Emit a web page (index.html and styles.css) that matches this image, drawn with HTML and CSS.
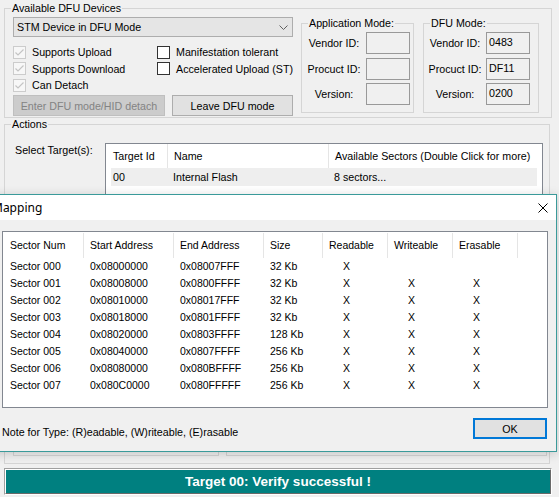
FILE: index.html
```html
<!DOCTYPE html>
<html lang="en">
<head>
  <meta charset="UTF-8" />
  <title>DfuSe Demo</title>
  <link rel="stylesheet" href="styles.css">
</head>
<body>
  <div class="window">
    <fieldset class="group devices">
      <legend>Available DFU Devices</legend>
      <div class="devices-body">
        <div class="device-col">
          <div class="combo">
            <span>STM Device in DFU Mode</span>
            <svg class="chevron" width="9" height="5" viewBox="0 0 9 5"><path d="M0.5 0.5 L4.5 4.5 L8.5 0.5" fill="none" stroke="#606060" /></svg>
          </div>
          <div class="checks">
            <label class="check off"><span class="box"><svg width="11" height="11" viewBox="0 0 11 11"><path d="M1.5 5.5 L4 8 L9.5 2.5" fill="none" stroke="#c4c4c4" stroke-width="1.2" /></svg></span>Supports Upload</label>
            <label class="check"><span class="box"></span>Manifestation tolerant</label>
            <label class="check off"><span class="box"><svg width="11" height="11" viewBox="0 0 11 11"><path d="M1.5 5.5 L4 8 L9.5 2.5" fill="none" stroke="#c4c4c4" stroke-width="1.2" /></svg></span>Supports Download</label>
            <label class="check"><span class="box"></span>Accelerated Upload (ST)</label>
            <label class="check off"><span class="box"><svg width="11" height="11" viewBox="0 0 11 11"><path d="M1.5 5.5 L4 8 L9.5 2.5" fill="none" stroke="#c4c4c4" stroke-width="1.2" /></svg></span>Can Detach</label>
          </div>
          <div class="buttons">
            <button class="btn btn-detach" disabled>Enter DFU mode/HID detach</button>
            <button class="btn btn-leave">Leave DFU mode</button>
          </div>
        </div>

        <fieldset class="group ids app-mode">
          <legend>Application Mode:</legend>
          <div class="id-grid">
            <span>Vendor ID:</span><span class="edit"></span>
            <span>Procuct ID:</span><span class="edit"></span>
            <span>Version:</span><span class="edit"></span>
          </div>
        </fieldset>

        <fieldset class="group ids dfu-mode">
          <legend>DFU Mode:</legend>
          <div class="id-grid">
            <span>Vendor ID:</span><span class="edit">0483</span>
            <span>Procuct ID:</span><span class="edit">DF11</span>
            <span>Version:</span><span class="edit">0200</span>
          </div>
        </fieldset>
      </div>
    </fieldset>

    <fieldset class="group actions">
      <legend>Actions</legend>
      <div class="target-row">
        <span class="target-label">Select Target(s):</span>
        <div class="listview targets">
          <div class="head">
            <span>Target Id</span><span>Name</span><span>Available Sectors (Double Click for more)</span>
          </div>
          <div class="item">
            <span>00</span><span>Internal Flash</span><span>8 sectors...</span>
          </div>
        </div>
      </div>
      <div class="action-boxes">
        <div class="box-upload"></div>
        <div class="box-upgrade"></div>
      </div>
    </fieldset>

    <div class="status">
      <div class="status-inner">Target 00: Verify successful !</div>
    </div>
  </div>

  <div class="dialog">
    <div class="dialog-title">
      <span>Mapping</span>
      <svg width="10" height="10" viewBox="0 0 10 10"><path d="M0.5 0.5 L9.5 9.5 M9.5 0.5 L0.5 9.5" stroke="#000" stroke-width="1" /></svg>
    </div>
    <div class="dialog-body">
      <div class="listview sectors">
        <div class="row head">
          <span>Sector Num</span><span>Start Address</span><span>End Address</span><span>Size</span><span>Readable</span><span>Writeable</span><span>Erasable</span><span></span>
        </div>
        <div class="row"><span>Sector 000</span><span>0x08000000</span><span>0x08007FFF</span><span>32 Kb</span><span class="x">X</span><span class="x"></span><span class="x"></span><span></span></div>
        <div class="row"><span>Sector 001</span><span>0x08008000</span><span>0x0800FFFF</span><span>32 Kb</span><span class="x">X</span><span class="x">X</span><span class="x">X</span><span></span></div>
        <div class="row"><span>Sector 002</span><span>0x08010000</span><span>0x08017FFF</span><span>32 Kb</span><span class="x">X</span><span class="x">X</span><span class="x">X</span><span></span></div>
        <div class="row"><span>Sector 003</span><span>0x08018000</span><span>0x0801FFFF</span><span>32 Kb</span><span class="x">X</span><span class="x">X</span><span class="x">X</span><span></span></div>
        <div class="row"><span>Sector 004</span><span>0x08020000</span><span>0x0803FFFF</span><span>128 Kb</span><span class="x">X</span><span class="x">X</span><span class="x">X</span><span></span></div>
        <div class="row"><span>Sector 005</span><span>0x08040000</span><span>0x0807FFFF</span><span>256 Kb</span><span class="x">X</span><span class="x">X</span><span class="x">X</span><span></span></div>
        <div class="row"><span>Sector 006</span><span>0x08080000</span><span>0x080BFFFF</span><span>256 Kb</span><span class="x">X</span><span class="x">X</span><span class="x">X</span><span></span></div>
        <div class="row"><span>Sector 007</span><span>0x080C0000</span><span>0x080FFFFF</span><span>256 Kb</span><span class="x">X</span><span class="x">X</span><span class="x">X</span><span></span></div>
      </div>
      <div class="dialog-foot">
        <span class="note">Note for Type: (R)eadable, (W)riteable, (E)rasable</span>
        <button class="btn btn-ok">OK</button>
      </div>
    </div>
  </div>
</body>
</html>
```

FILE: styles.css
```css
* {
  margin: 0;
  padding: 0;
  box-sizing: border-box;
}

body {
  position: relative;
  width: 559px;
  height: 497px;
  overflow: hidden;
  background: #f0f0f0;
  font-family: "Liberation Sans", Arial, sans-serif;
  font-size: 10.7px;
  color: #000;
}

.window {
  padding-top: 2px;
}

/* group boxes */
.group {
  min-width: 0;
  border: 1px solid #d5d5d5;
}

.group > legend {
  margin-left: 6px;
  padding: 0 1px;
  line-height: 13px;
}

.devices {
  margin: 0 7px 0 4px;
  padding-bottom: 1px;
}

.devices-body {
  display: flex;
  align-items: flex-start;
}

.device-col {
  width: 280px;
  margin-left: 8px;
}

.combo {
  display: flex;
  align-items: center;
  justify-content: space-between;
  height: 20px;
  margin-top: 2px;
  padding: 0 4px 0 3px;
  background: #e5e5e5;
  border: 1px solid #adadad;
}

.checks {
  display: grid;
  grid-template-columns: 144px auto;
  grid-auto-rows: 16.5px;
  align-items: center;
  margin-top: 7px;
}

.check {
  display: flex;
  align-items: center;
  gap: 6px;
  white-space: nowrap;
}

.check .box {
  display: flex;
  align-items: center;
  justify-content: center;
  width: 13px;
  height: 13px;
  background: #fff;
  border: 1px solid #333;
}

.check.off .box {
  background: #f7f7f7;
  border-color: #cccccc;
}

.buttons {
  display: flex;
  gap: 7px;
  margin-top: 1.5px;
}

.btn {
  height: 21px;
  font: inherit;
  color: #000;
  background: #e1e1e1;
  border: 1px solid #adadad;
}

.btn:disabled {
  color: #838383;
  background: #cccccc;
  border-color: #bfbfbf;
}

.btn-detach {
  width: 152px;
}

.btn-leave {
  width: 121px;
}

/* vendor / product id boxes */
.ids {
  height: 96px;
  margin-top: 2px;
}

.app-mode {
  width: 113px;
  margin-left: 8px;
}

.dfu-mode {
  width: 116px;
  margin-left: 9px;
}

.id-grid {
  display: grid;
  grid-template-columns: 1fr 44px;
  grid-auto-rows: 22px;
  row-gap: 3.5px;
  align-items: center;
  margin-top: 2px;
  text-align: center;
}

.app-mode .id-grid {
  padding-right: 3px;
}

.dfu-mode .id-grid {
  padding-right: 8px;
}

.edit {
  height: 22px;
  padding: 3px 0 0 2px;
  line-height: 13px;
  text-align: left;
  background: #f0f0f0;
  border: 1px solid #999;
}

/* actions */
.actions {
  margin: 0 9px 0 4px;
  padding-bottom: 7px;
}

.target-row {
  display: flex;
  margin: 12px 0 0 10px;
}

.target-label {
  width: 90px;
  padding-top: 1px;
  line-height: 13px;
}

.listview {
  background: #fff;
  border: 1px solid #828790;
}

.targets {
  flex: 1;
  height: 120px;
  margin-right: 6px;
  padding-right: 5px;
}

.targets .head {
  display: grid;
  grid-template-columns: 62px 161px 1fr;
  height: 24px;
}

.targets .head span {
  padding-left: 6px;
  line-height: 24px;
  border-right: 1px solid #e5e5e5;
  white-space: nowrap;
}

.targets .head span:first-child {
  padding-left: 7px;
}

.targets .head span:last-child {
  border-right: none;
}

.targets .item {
  display: grid;
  grid-template-columns: 57px 161px 1fr;
  height: 18px;
  margin-left: 5px;
  line-height: 18px;
  background: #eeeeee;
}

.targets .item span {
  padding-left: 5px;
}

.targets .item span:first-child {
  padding-left: 2px;
}

.action-boxes {
  display: flex;
  gap: 7px;
  height: 183px;
  margin: 10px 2px 0 8px;
}

.box-upload {
  width: 206px;
  border: 1px solid #d5d5d5;
}

.box-upgrade {
  flex: 1;
  border: 1px solid #d5d5d5;
}

.status {
  margin: 4px 7px 0 4px;
  border: 1px solid;
  border-color: #a0a0a0 #ffffff #ffffff #a0a0a0;
}

.status-inner {
  height: 25px;
  line-height: 23px;
  text-align: center;
  font-size: 13.5px;
  font-weight: bold;
  color: #fff;
  background: #008080;
  border: 1px solid;
  border-color: #ffffff #696969 #696969 #ffffff;
}

/* sector mapping window */
.dialog {
  position: absolute;
  left: -16px;
  top: 194px;
  width: 573px;
  height: 258px;
  background: #f0f0f0;
  border: 1px solid #3a9a9a;
  box-shadow: 0 2px 10px rgba(0,0,0,0.18);
}

.dialog-title {
  display: flex;
  align-items: center;
  justify-content: space-between;
  height: 25px;
  padding: 0 8px 0 7px;
  background: #fff;
  font-family: "Noto Sans", "Open Sans", sans-serif;
  font-size: 12px;
}

.dialog-body {
  padding: 11px 8px 0 17px;
}

.sectors {
  height: 177px;
  font-size: 10.5px;
}

.sectors .row {
  display: grid;
  grid-template-columns: 81px 90px 90px 59px 65px 65px 65px 1fr;
  height: 17px;
  line-height: 17px;
}

.sectors .row span {
  padding-left: 6px;
  white-space: nowrap;
}

.sectors .row span:first-child {
  padding-left: 7px;
}

.sectors .head {
  height: 26px;
}

.sectors .head span {
  margin-top: 1px;
  line-height: 24px;
  border-right: 1px solid #e5e5e5;
}

.sectors .head span:last-child {
  border-right: none;
}

.sectors .row .x {
  padding-left: 20px;
}

.dialog-foot {
  display: flex;
  align-items: flex-end;
  justify-content: space-between;
  margin-top: 10px;
}

.note {
  line-height: 13px;
}

.btn-ok {
  width: 74px;
  margin-right: 1px;
  border: 2px solid #0078d7;
}
```
